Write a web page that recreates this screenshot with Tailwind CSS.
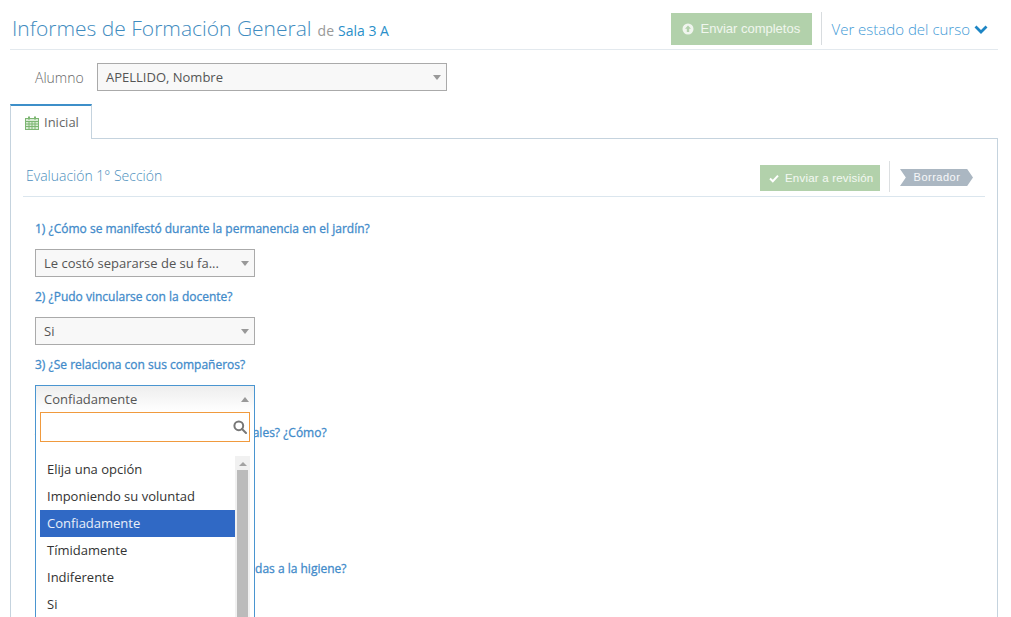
<!DOCTYPE html>
<html lang="es">
<head>
  <meta charset="UTF-8">
  <title>Informes de Formación General</title>
  <script src="https://cdn.jsdelivr.net/npm/@tailwindcss/browser@4"></script>
</head>
<body class="bg-white h-[617px] overflow-hidden font-['Open_Sans',sans-serif] text-[#555]">

  <!-- Header -->
  <header class="ml-[10px] mr-[13px] h-[50px] border-b border-[#e3e9ee] flex items-start justify-between">
    <div class="pl-[2px] pt-[13px] flex items-baseline">
      <h1 class="text-[21px] leading-[30px] font-light text-[#3f8cc0]">Informes de Formación General</h1>
      <span class="ml-[6px] text-[14px] text-[#999]">de</span>
      <a href="#" class="ml-[4px] text-[14px] text-[#2a8fc9]">Sala 3 A</a>
    </div>
    <div class="flex items-start pt-[12px] pr-[10px]">
      <button class="mt-px w-[141px] h-[32px] pl-[11px] bg-[#b2d1ab] text-white/80 text-[13px] font-['Liberation_Sans',sans-serif] flex items-center gap-[6px]">
        <svg class="w-[12px] h-[12px]" viewBox="0 0 12 12"><circle cx="6" cy="6" r="5.5" fill="#f0f5ee"/><path d="M6 2.6 9 5.8H7.2V9H4.8V5.8H3z" fill="#b2d1ab"/></svg>
        Enviar completos
      </button>
      <div class="ml-[9px] h-[33px] border-l border-[#d8dcdf] pl-[9px] pt-px flex items-center text-[15px] text-[#3f9ad6] font-light">
        Ver estado del curso
        <svg class="ml-[4px] w-[14px] h-[10px]" viewBox="0 0 14 10"><path d="M1.5 2.5 7 8l5.5-5.5" fill="none" stroke="#1d85c4" stroke-width="2.8"/></svg>
      </div>
    </div>
  </header>

  <!-- Alumno -->
  <div class="mt-[13px] flex items-center h-[28px]">
    <label class="ml-[35px] w-[62px] text-[14px] font-light text-[#666]">Alumno</label>
    <div class="w-[350px] h-[28px] border border-[#aaa] bg-[#f8f8f8] pl-[8px] pr-[5px] flex items-center justify-between text-[13px] text-[#555]">
      <span class="pt-px">APELLIDO, Nombre</span>
      <span class="w-0 h-0 border-x-[4px] border-x-transparent border-t-[5px] border-t-[#999]"></span>
    </div>
  </div>

  <!-- Tabs -->
  <div class="mt-[13px] ml-[10px] mr-[13px] h-[35px] flex border-b border-[#c5d3de]">
    <div class="w-[82px] h-[35px] border-x border-[#c5d3de] border-t-2 border-t-[#3d8fc9] bg-white pl-[14px] flex items-center gap-[5px] text-[13px] text-[#666]">
      <svg class="w-[14px] h-[14px]" viewBox="0 0 14 14" fill="none" stroke="#7db673" stroke-width="1"><rect x="0.5" y="2.5" width="13" height="11" fill="#d9ecd5"/><path d="M1 5.5h12M1 8h12M1 10.5h12M4 5.5V13M7 5.5V13M10 5.5V13"/><path d="M4 0.5v3M10 0.5v3" stroke-width="2"/></svg>
      Inicial
    </div>
  </div>

  <!-- Panel -->
  <main class="ml-[10px] mr-[13px] h-[479px] border-x border-[#c5d3de] px-[12px] relative">
    <div class="h-[58px] border-b border-[#dbe6ee] flex items-start justify-between">
      <h2 class="pt-[26px] pl-[3px] text-[14px] leading-[22px] font-light text-[#4c8fbd]">Evaluación 1° Sección</h2>
      <div class="flex items-start pt-[26px] pr-[12px]">
        <button class="w-[120px] h-[26px] pl-[9px] pt-px bg-[#b2d1ab] text-white/85 text-[11.5px] tracking-[0.2px] font-['Liberation_Sans',sans-serif] flex items-center gap-[6px]">
          <svg class="w-[10px] h-[9px]" viewBox="0 0 10 9"><path d="M1 4.5 3.8 7.2 9 1.6" fill="none" stroke="#fff" stroke-width="2"/></svg>
          Enviar a revisión
        </button>
        <div class="ml-[9px] h-[31px] -mt-[4px] border-l border-[#dcdfe1] pl-[10px] pt-[8px]">
          <div class="w-[73px] h-[17px] pl-px bg-[#abb7c2] [clip-path:polygon(0_0,92%_0,100%_50%,92%_100%,0_100%,8%_50%)] text-white/90 text-[11px] tracking-[0.5px] leading-[17px] text-center font-['Liberation_Sans',sans-serif]">Borrador</div>
        </div>
      </div>
    </div>

    <!-- Preguntas -->
    <div class="pl-[12px] pt-[21px]">
      <div class="h-[68px]">
        <p class="h-[31px] text-[12px] leading-[21px] [-webkit-text-stroke:0.3px_#428bca] text-[#428bca]">1) ¿Cómo se manifestó durante la permanencia en el jardín?</p>
        <div class="w-[220px] h-[28px] border border-[#aaa] bg-[#f8f8f8] pl-[8px] pr-[5px] flex items-center justify-between text-[13px] text-[#555]">
          <span class="pt-px">Le costó separarse de su fa...</span>
          <span class="w-0 h-0 border-x-[4px] border-x-transparent border-t-[5px] border-t-[#999]"></span>
        </div>
      </div>
      <div class="h-[68px]">
        <p class="h-[31px] text-[12px] leading-[21px] [-webkit-text-stroke:0.3px_#428bca] text-[#428bca]">2) ¿Pudo vincularse con la docente?</p>
        <div class="w-[220px] h-[28px] border border-[#aaa] bg-[#f8f8f8] pl-[8px] pr-[5px] flex items-center justify-between text-[13px] text-[#555]">
          <span class="pt-px">Si</span>
          <span class="w-0 h-0 border-x-[4px] border-x-transparent border-t-[5px] border-t-[#999]"></span>
        </div>
      </div>
      <div class="h-[68px] relative">
        <p class="h-[31px] text-[12px] leading-[21px] [-webkit-text-stroke:0.3px_#428bca] text-[#428bca]">3) ¿Se relaciona con sus compañeros?</p>

        <!-- Desplegable abierto -->
        <div class="absolute z-10 left-0 top-[31px] w-[220px] h-[232px] border border-[#4a95d0] border-b-0 bg-white overflow-hidden">
          <div class="h-[26px] pl-[8px] pr-[5px] flex items-center justify-between text-[13px] text-[#555] bg-gradient-to-b from-[#eee] to-white">
            <span class="pt-px">Confiadamente</span>
            <span class="w-0 h-0 border-x-[4px] border-x-transparent border-b-[5px] border-b-[#999]"></span>
          </div>
          <div class="mx-[4px] h-[30px] border border-[#f09a3e] flex items-center justify-end pr-[2px]">
            <svg class="w-[14px] h-[14px]" viewBox="0 0 14 14" fill="none" stroke="#777" stroke-width="2"><circle cx="5.8" cy="5.8" r="4.4"/><path d="M9 9l4 4" stroke-linecap="round"/></svg>
          </div>
          <div class="mt-[14px] ml-[4px] mr-[4px] flex">
            <ul class="w-[195px] text-[13px] leading-[27px] text-[#333]">
              <li class="pl-[7px] h-[27px]">Elija una opción</li>
              <li class="pl-[7px] h-[27px]">Imponiendo su voluntad</li>
              <li class="pl-[7px] h-[27px] bg-[#3069c5] text-white/90">Confiadamente</li>
              <li class="pl-[7px] h-[27px]">Tímidamente</li>
              <li class="pl-[7px] h-[27px]">Indiferente</li>
              <li class="pl-[7px] h-[27px]">Si</li>
            </ul>
            <div class="w-[15px] h-[170px] bg-[#f1f1f1] pl-[2px] flex flex-col">
              <span class="mt-[6px] ml-[2px] w-0 h-0 border-x-[4px] border-x-transparent border-b-[4px] border-b-[#a3a3a3]"></span>
              <span class="mt-[4px] w-[11px] flex-1 bg-[#bbb]"></span>
            </div>
          </div>
        </div>
      </div>
      <div class="h-[68px]">
        <p class="h-[31px] text-[12px] leading-[21px] [-webkit-text-stroke:0.3px_#428bca] text-[#428bca]">4) ¿Se relaciona con los juegos y materiales? ¿Cómo?</p>
      </div>
      <div class="h-[68px]">
        <p class="h-[31px] text-[12px] leading-[21px] [-webkit-text-stroke:0.3px_#428bca] text-[#428bca]">5) ¿Participa?</p>
      </div>
      <div class="h-[68px]">
        <p class="h-[31px] text-[12px] leading-[21px] [-webkit-text-stroke:0.3px_#428bca] text-[#428bca]">6) ¿Cómo responde a las pautas vinculadas a la higiene?</p>
      </div>
    </div>
  </main>

</body>
</html>
